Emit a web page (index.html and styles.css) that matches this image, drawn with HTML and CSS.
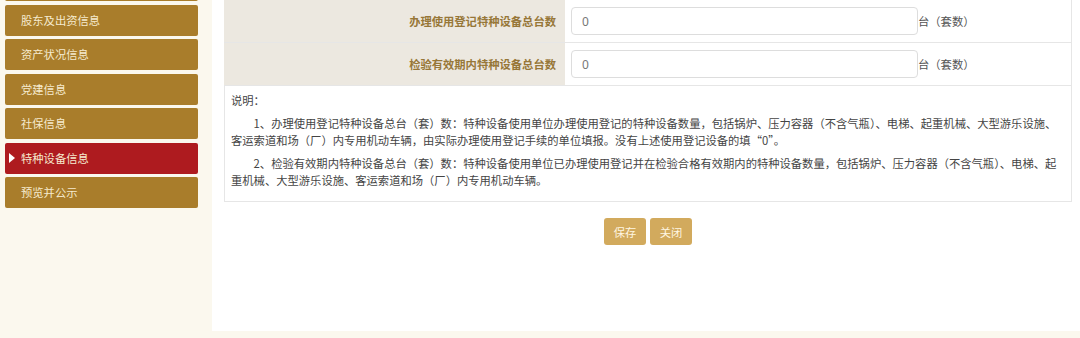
FILE: index.html
```html
<!DOCTYPE html>
<html>
  <head>
    <title>特种设备信息</title>
    <link rel="stylesheet" href="styles.css">
  </head>
  <body>
    <div class="page">
      <div class="sidebar">
        <a href="" class="menu-item top-cut"></a>
        <a href="" class="menu-item">股东及出资信息</a>
        <a href="" class="menu-item">资产状况信息</a>
        <a href="" class="menu-item">党建信息</a>
        <a href="" class="menu-item">社保信息</a>
        <a href="" class="menu-item active">特种设备信息</a>
        <a href="" class="menu-item">预览并公示</a>
      </div>
      <div class="main">
        <table class="form-table">
          <tbody>
            <tr>
              <th>办理使用登记特种设备总台数</th>
              <td><input type="text" value="0"><span class="unit">台（套数）</span></td>
            </tr>
            <tr>
              <th>检验有效期内特种设备总台数</th>
              <td><input type="text" value="0"><span class="unit">台（套数）</span></td>
            </tr>
          </tbody>
        </table>
        <div class="note">
          <p class="note-title">说明：</p>
          <p>1、办理使用登记特种设备总台（套）数：特种设备使用单位办理使用登记的特种设备数量，包括锅炉、压力容器（不含气瓶）、电梯、起重机械、大型游乐设施、客运索道和场（厂）内专用机动车辆，由实际办理使用登记手续的单位填报。没有上述使用登记设备的填“0”。</p>
          <p>2、检验有效期内特种设备总台（套）数：特种设备使用单位已办理使用登记并在检验合格有效期内的特种设备数量，包括锅炉、压力容器（不含气瓶）、电梯、起重机械、大型游乐设施、客运索道和场（厂）内专用机动车辆。</p>
        </div>
        <div class="actions">
          <button class="btn">保存</button>
          <button class="btn">关闭</button>
        </div>
      </div>
    </div>
  </body>
</html>
```

FILE: styles.css
```css
* {
  margin: 0;
  padding: 0;
  box-sizing: border-box;
}

body {
  background-color: #fbf8ee;
  font-family: "Noto Sans CJK SC", "Noto Sans", sans-serif;
  font-size: 11.3px;
  color: #333;
  height: 338px;
  overflow: hidden;
}

.page {
  display: flex;
  align-items: flex-start;
}

.sidebar {
  width: 212px;
  flex-shrink: 0;
  display: flex;
  flex-direction: column;
  gap: 3.5px;
  padding: 0 14px 0 5px;
  margin-top: -30px;
}

.menu-item {
  display: block;
  height: 31px;
  line-height: 31px;
  padding-left: 16px;
  background-color: #a97d2b;
  color: #f6ebcf;
  text-decoration: none;
  border-radius: 2px;
  position: relative;
}

.menu-item.active {
  background-color: #ae1b1f;
}

.menu-item.active::before {
  content: "";
  position: absolute;
  left: 4px;
  top: 10px;
  border-left: 6px solid #fff;
  border-top: 5px solid transparent;
  border-bottom: 5px solid transparent;
}

.main {
  flex: 1;
  background-color: #fff;
  height: 331px;
  padding: 0 8px 0 12px;
}

.form-table {
  width: 100%;
  border-collapse: collapse;
  border-top: 1px solid #e6e6e6;
  margin-top: -1px;
}

.form-table th,
.form-table td {
  height: 43px;
  border-bottom: 1px solid #e6e6e6;
}

.form-table th {
  width: 341px;
  background-color: #ece8e0;
  color: #977738;
  text-align: right;
  padding-right: 9px;
  font-weight: bold;
}

.form-table td {
  padding-left: 6px;
  border-right: 1px solid #e6e6e6;
}

.form-table input {
  width: 347px;
  height: 28px;
  border: 1px solid #ddd;
  border-radius: 4px;
  padding: 0 10px;
  font-family: "Noto Sans", sans-serif;
  font-size: 12px;
  color: #777;
  vertical-align: middle;
}

.unit {
  vertical-align: middle;
  color: #555;
}

.note {
  border: 1px solid #e6e6e6;
  border-top: none;
  padding: 6px 8px 12px 6px;
  line-height: 17px;
  color: #444;
}

.note p {
  text-indent: 2em;
  margin-top: 6px;
}

.note .note-title {
  text-indent: 0;
  margin-top: 0;
}

.actions {
  display: flex;
  justify-content: center;
  gap: 4px;
  margin-top: 16px;
}

.btn {
  width: 42px;
  height: 27px;
  border: none;
  border-radius: 3px;
  background-color: #d2aa5d;
  color: #fff6e2;
  font-family: "Noto Sans CJK SC", sans-serif;
  font-size: 11.3px;
}
```
